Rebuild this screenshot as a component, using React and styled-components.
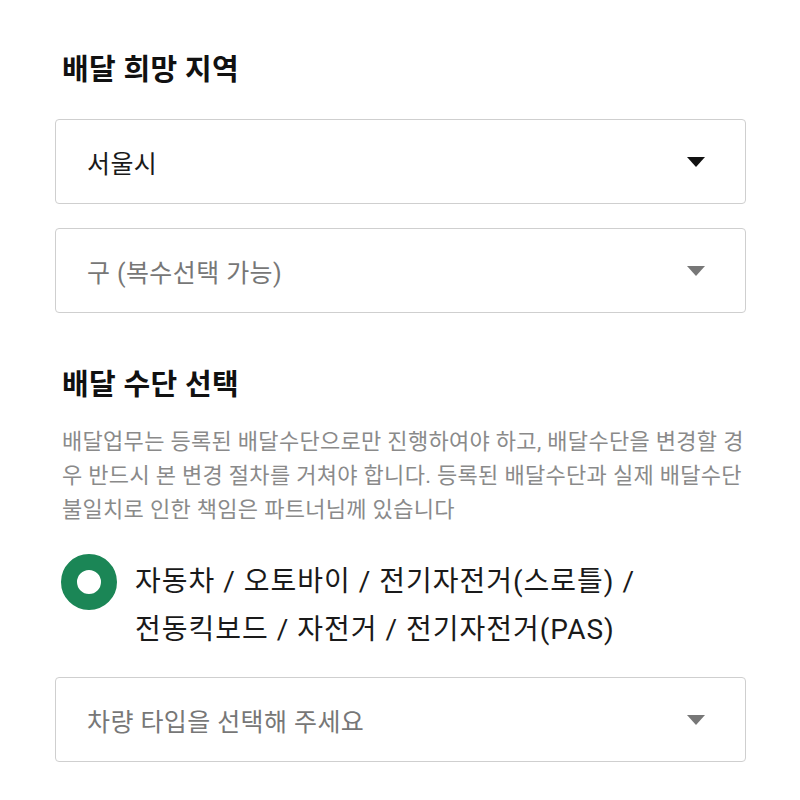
import styled, { createGlobalStyle } from "styled-components"

const Global = createGlobalStyle`
body {
  margin: 0;
  background: #fff;
  font-family: "Roboto", "Noto Sans CJK KR", "Noto Sans", sans-serif;
}
`

const Page = styled.div`
width: 800px;
box-sizing: border-box;
padding: 50px 54px 0 55px;
display: flex;
flex-direction: column;
`

const Title = styled.h2`
margin: ${props => props.top || 0}px 0 0 7px;
font-size: 29px;
line-height: 40px;
letter-spacing: 0.3px;
font-weight: 700;
color: #111;
`

const Select = styled.div`
height: 85px;
box-sizing: border-box;
border: 1px solid #cfcfcf;
border-radius: 4px;
display: flex;
align-items: center;
justify-content: space-between;
padding: 0 40px 0 31px;
margin-top: ${props => props.top}px;
font-size: 25px;
letter-spacing: 0.4px;
color: ${props => (props.placeholder ? "#777" : "#1a1a1a")};
`

const Arrow = styled.span`
width: 0;
height: 0;
border-left: 9px solid transparent;
border-right: 9px solid transparent;
border-top: 10px solid ${props => (props.placeholder ? "#777" : "#111")};
`

const Desc = styled.p`
margin: 20px 0 0 7px;
font-size: 22px;
line-height: 34px;
letter-spacing: 0.3px;
color: #8a8a8a;
white-space: nowrap;
`

const Option = styled.label`
display: flex;
align-items: flex-start;
margin-top: 31px;
`

const Radio = styled.span`
flex: none;
width: 56px;
height: 56px;
box-sizing: border-box;
border-radius: 50%;
border: 16px solid #1b8656;
background: #fff;
margin: -4px 0 0 6px;
`

const OptionText = styled.span`
margin-left: 18px;
font-size: 28px;
line-height: 48px;
letter-spacing: 1px;
color: #1a1a1a;
`

export default function App() {
  return (
    <Page>
      <Global />
      <Title>배달 희망 지역</Title>
      <Select top={29}>
        서울시
        <Arrow />
      </Select>
      <Select top={24} placeholder="1">
        구 (복수선택 가능)
        <Arrow placeholder="1" />
      </Select>
      <Title top={52}>배달 수단 선택</Title>
      <Desc>
        배달업무는 등록된 배달수단으로만 진행하여야 하고, 배달수단을 변경할 경<br />
        우 반드시 본 변경 절차를 거쳐야 합니다. 등록된 배달수단과 실제 배달수단<br />
        불일치로 인한 책임은 파트너님께 있습니다
      </Desc>
      <Option>
        <Radio />
        <OptionText>
          자동차 / 오토바이 / 전기자전거(스로틀) /<br />
          전동킥보드 / 자전거 / 전기자전거(PAS)
        </OptionText>
      </Option>
      <Select top={23} placeholder="1">
        차량 타입을 선택해 주세요
        <Arrow placeholder="1" />
      </Select>
    </Page>
  )
}
